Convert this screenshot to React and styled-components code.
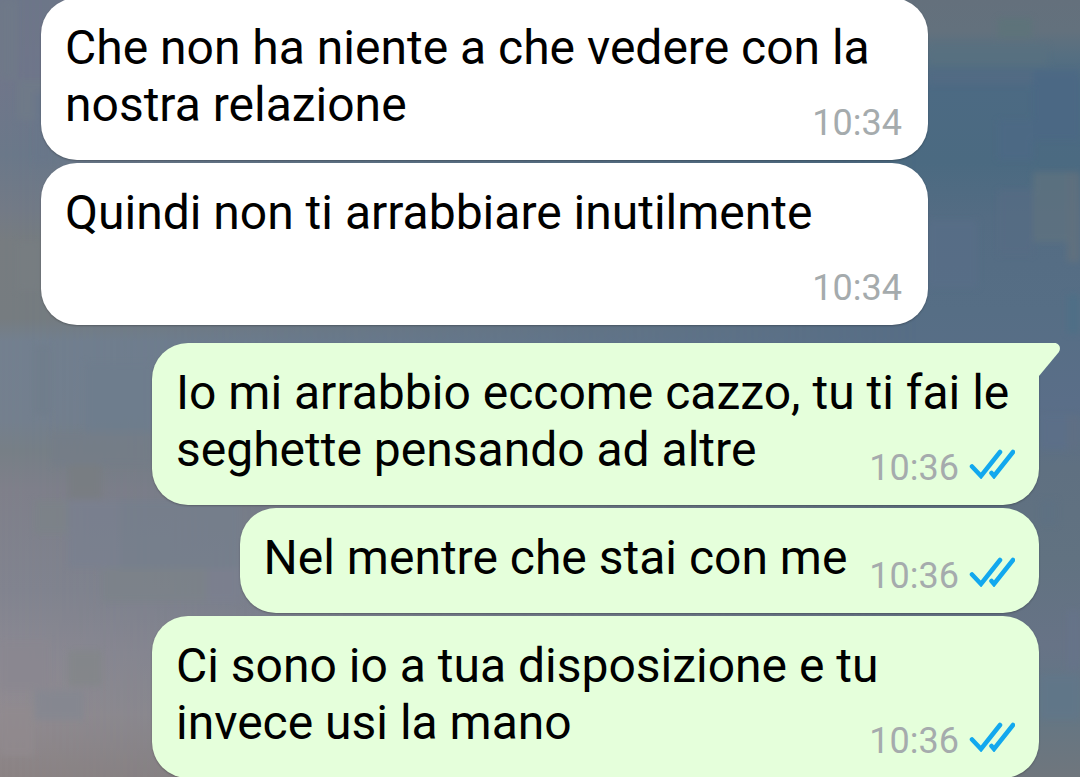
import React from 'react';
import styled, { createGlobalStyle, css } from 'styled-components';

const GlobalStyle = createGlobalStyle`
  *, *::before, *::after {
    box-sizing: border-box;
  }

  body {
    margin: 0;
    font-family: Roboto, 'Liberation Sans', sans-serif;
  }
`;

const theme = {
  incoming: '#ffffff',
  outgoing: '#e5ffdb',
  text: '#000000',
  time: '#a5abad',
  read: '#12a8ee',
};

const ChatWrapper = styled.main`
  position: relative;
  height: 100vh;
  overflow: hidden;
  background: linear-gradient(
    180deg,
    #64707c 0%,
    #63717d 4%,
    #566f81 7%,
    #4c6a83 11%,
    #4b6a81 21%,
    #546c83 28%,
    #566e85 40%,
    #5a6e88 52%,
    #5f7081 60%,
    #617281 72%,
    #677386 83%,
    #627685 90%,
    #6f767d 100%
  );

  &::before {
    content: '';
    position: absolute;
    inset: 0;
    background: linear-gradient(
      180deg,
      #6d7689 0%,
      #70768a 10%,
      #6b7889 20%,
      #737a86 27%,
      #777c80 31%,
      #767c80 41%,
      #73808f 44%,
      #74808e 54%,
      #777f86 58%,
      #7f808a 63%,
      #82848f 76%,
      #8b8992 84%,
      #918b90 92%,
      #8b8384 100%
    );
    mask-image: linear-gradient(90deg, #000, rgba(0, 0, 0, 0.75) 20%, transparent 85%);
  }
`;

const StyledWallpaper = styled.svg`
  position: absolute;
  inset: 0;
  width: 100%;
  height: 100%;
`;

const MessageList = styled.ol`
  display: flex;
  position: relative;
  flex-direction: column;
  gap: 3px;
  margin: -2px 0 0;
  padding: 0 41px;
  list-style: none;
`;

const Bubble = styled.li`
  position: relative;
  align-self: flex-start;
  max-width: calc(100% - 111px);
  padding: 21px 26px 27px 24px;
  border-radius: 36px;
  background-color: ${theme.incoming};
  box-shadow: 0 1px 2px rgba(0, 0, 0, 0.25);

  ${({ $outgoing }) =>
    $outgoing &&
    css`
      align-self: flex-end;
      padding-right: 24px;
      background-color: ${theme.outgoing};
    `}

  ${({ $first }) =>
    $first &&
    css`
      margin-top: 15px;
      border-top-right-radius: 0;
    `}
`;

const Text = styled.div`
  display: flow-root;
  color: ${theme.text};
  font-size: 48px;
  line-height: 57px;
`;

// shares the last line with the text, or drops under it when there is no room
const Meta = styled.span`
  display: flex;
  float: right;
  align-items: flex-start;
  gap: 10px;
  height: 57px;
  margin-left: 22px;
  padding-top: 28px;
`;

const Time = styled.time`
  color: ${theme.time};
  font-size: 36px;
  line-height: 38px;
`;

const Ticks = styled.svg`
  display: block;
  width: 46px;
  height: 30px;
  fill: none;
  stroke: ${theme.read};
  stroke-width: 4.5;
  stroke-linecap: round;
`;

const Tail = styled.svg`
  position: absolute;
  top: 0;
  left: 100%;
  width: 22px;
  height: 34px;
  fill: ${theme.outgoing};
`;

const messages = [
  { id: 1, time: '10:34', text: 'Che non ha niente a che vedere con la nostra relazione' },
  { id: 2, time: '10:34', text: 'Quindi non ti arrabbiare inutilmente' },
  {
    id: 3,
    time: '10:36',
    outgoing: true,
    first: true,
    text: 'Io mi arrabbio eccome cazzo, tu ti fai le seghette pensando ad altre',
  },
  { id: 4, time: '10:36', outgoing: true, text: 'Nel mentre che stai con me' },
  {
    id: 5,
    time: '10:36',
    outgoing: true,
    text: 'Ci sono io a tua disposizione e tu invece usi la mano',
  },
];

// x, y, width, height, color
const patches = [
  [0, 0, 17, 80, '#6f7a88'],
  [17, 80, 34, 40, '#6f7c88'],
  [34, 92, 17, 70, '#69778a'],
  [17, 241, 24, 50, '#787e82'],
  [34, 345, 17, 70, '#707d8b'],
  [85, 362, 67, 70, '#6e7d8d'],
  [52, 432, 100, 34, '#757d88'],
  [68, 465, 34, 34, '#787d80'],
  [34, 500, 34, 34, '#7b8388'],
  [68, 500, 52, 68, '#798090'],
  [120, 500, 120, 68, '#757f8d'],
  [102, 568, 105, 34, '#7c8389'],
  [207, 568, 33, 34, '#7b8090'],
  [0, 640, 50, 50, '#8a8790'],
  [68, 650, 34, 36, '#828688'],
  [34, 690, 50, 30, '#838791'],
  [0, 706, 34, 50, '#918a8e'],
  [928, 45, 120, 20, '#587180'],
  [998, 18, 34, 20, '#5b7479'],
  [928, 70, 105, 15, '#526b84'],
  [1033, 70, 47, 70, '#4b6785'],
  [998, 120, 35, 40, '#4d6986'],
  [998, 190, 35, 65, '#576c84'],
  [1033, 172, 34, 70, '#61737f'],
  [1067, 172, 13, 90, '#65727d'],
  [928, 220, 50, 68, '#586e88'],
  [1067, 294, 13, 40, '#4e6f87'],
  [1040, 415, 27, 35, '#5c6f8a'],
  [1067, 415, 13, 34, '#606f84'],
  [1040, 500, 17, 25, '#5d7183'],
  [1067, 610, 13, 60, '#66738a'],
  [1040, 675, 40, 45, '#60778a'],
];

const Wallpaper = () => (
  <StyledWallpaper viewBox="0 0 1080 777" preserveAspectRatio="none" aria-hidden="true">
    <defs>
      <filter id="soften">
        <feGaussianBlur stdDeviation="3" />
      </filter>
    </defs>
    <g filter="url(#soften)" opacity="0.7">
      {patches.map(([x, y, width, height, color]) => (
        <rect key={`${x}-${y}`} x={x} y={y} width={width} height={height} fill={color} />
      ))}
    </g>
  </StyledWallpaper>
);

const ReadTicks = () => (
  <Ticks viewBox="0 0 46 30" role="img" aria-label="Letto">
    <path d="M3 17.5 12 27 31 3" />
    <path d="M22.5 24 25 27 44 3" />
  </Ticks>
);

const Message = ({ text, time, outgoing, first }) => (
  <Bubble $outgoing={outgoing} $first={first}>
    <Text>
      {text}
      <Meta>
        <Time>{time}</Time>
        {outgoing && <ReadTicks />}
      </Meta>
    </Text>
    {first && (
      <Tail viewBox="0 0 22 34" aria-hidden="true">
        <path d="M0 0H15.5C20.5 0 22.5 5.5 19.5 9.5L0 33Z" />
      </Tail>
    )}
  </Bubble>
);

const App = () => (
  <>
    <GlobalStyle />
    <ChatWrapper>
      <Wallpaper />
      <MessageList>
        {messages.map(({ id, ...message }) => (
          <Message key={id} {...message} />
        ))}
      </MessageList>
    </ChatWrapper>
  </>
);

export default App;
